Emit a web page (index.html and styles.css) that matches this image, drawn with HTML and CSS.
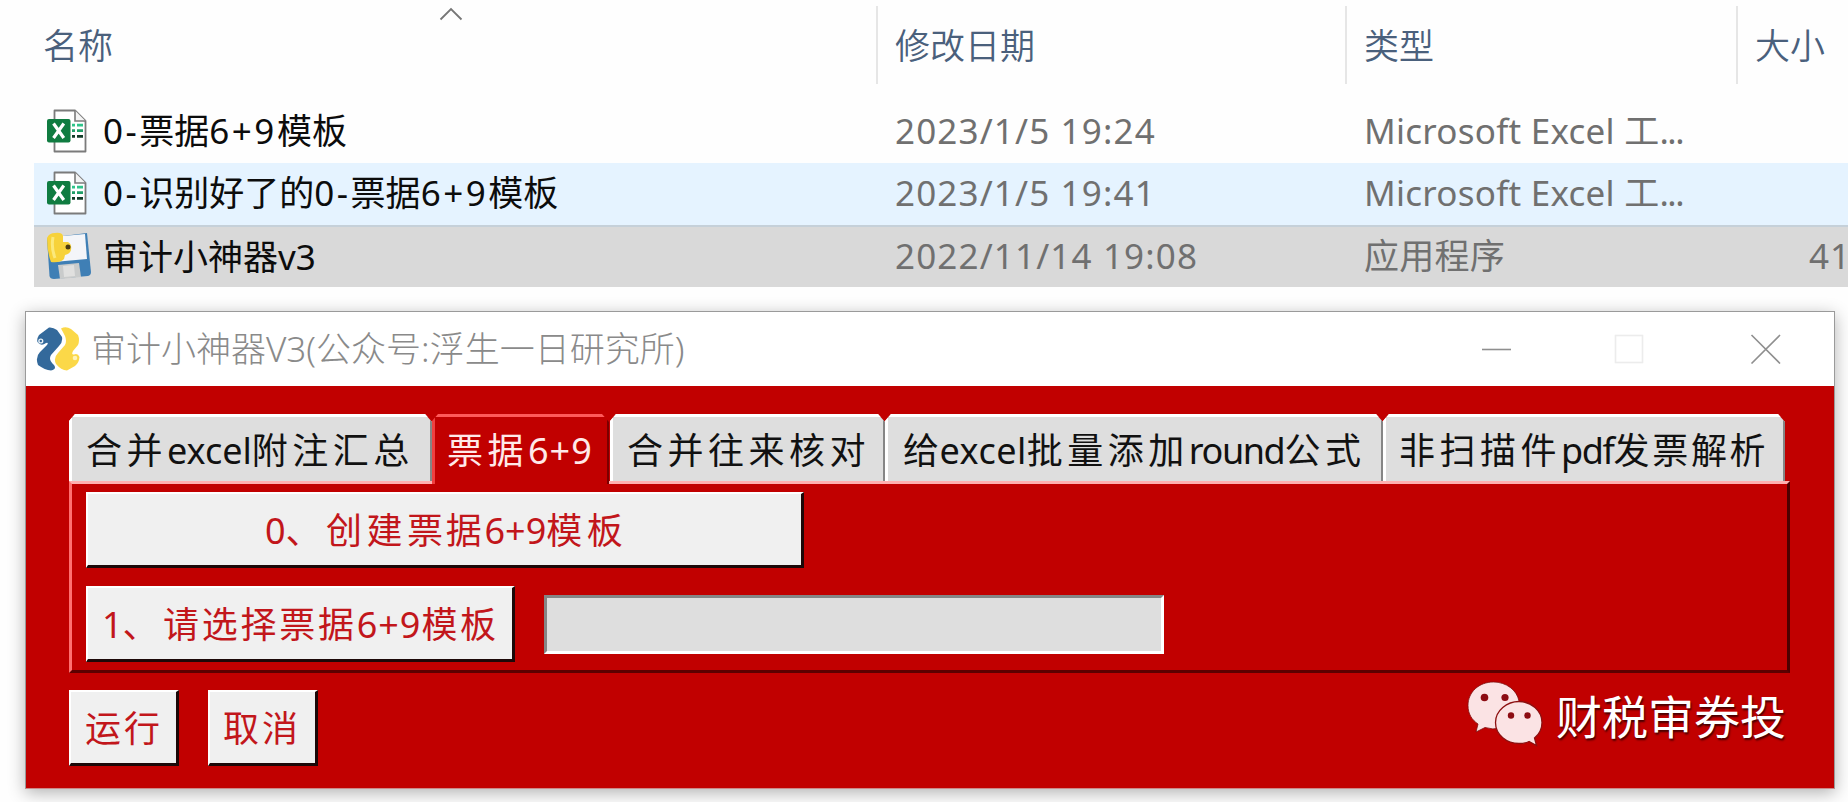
FILE: index.html
```html
<!DOCTYPE html>
<html lang="zh-CN">
<head>
<meta charset="utf-8">
<title>审计小神器V3</title>
<link rel="stylesheet" href="styles.css">
</head>
<body>
<svg class="defs" width="0" height="0">
  <symbol id="xls" viewBox="0 0 40 44">
    <path d="M7.5 1.5H28L38.5 12V42.5H7.500Z" fill="#fff" stroke="#7b7b7b" stroke-width="1.800" stroke-linejoin="round"/>
    <path d="M28 1.500V12H38.500" fill="#f4f4f4" stroke="#7b7b7b" stroke-width="1.600"/>
    <path d="M25 16.200h3M30 16.200h6" stroke="#2fc48a" stroke-width="2.800"/>
    <path d="M25 21.700h3M30 21.700h6" stroke="#1f9f68" stroke-width="2.800"/>
    <path d="M25 27.300h3M30 27.300h6" stroke="#123c28" stroke-width="2.800"/>
    <rect x="0" y="10" width="23.500" height="23.500" rx="2" fill="#107c41"/>
    <path d="M6.500 14.500L16.800 29M16.800 14.500L6.500 29" stroke="#fff" stroke-width="3.200"/>
  </symbol>
</svg>
<main class="explorer">
  <div class="head">
    <svg class="caret" width="24" height="14" viewBox="0 0 24 14"><path d="M1.500 12.500L12 2L22.500 12.500" fill="none" stroke="#767676" stroke-width="1.800"/></svg>
    <div class="col c-name">名称</div>
    <div class="col c-date">修改日期</div>
    <div class="col c-type">类型</div>
    <div class="col c-size">大小</div>
  </div>
  <div class="row">
    <div class="cell c-name"><svg class="ico" width="40" height="44"><use href="#xls"/></svg><span><i>0-</i>票据<i>6+9</i>模板</span></div>
    <div class="cell c-date">2023/1/5 19:24</div>
    <div class="cell c-type">Microsoft Excel 工<b>...</b></div>
    <div class="cell c-size"></div>
  </div>
  <div class="row hover">
    <div class="cell c-name"><svg class="ico" width="40" height="44"><use href="#xls"/></svg><span><i>0-</i>识别好了的<i>0-</i>票据<i>6+9</i>模板</span></div>
    <div class="cell c-date">2023/1/5 19:41</div>
    <div class="cell c-type">Microsoft Excel 工<b>...</b></div>
    <div class="cell c-size"></div>
  </div>
  <div class="row selected">
    <div class="cell c-name">
      <svg class="ico" width="46" height="48" viewBox="0 0 46 48">
        <path d="M1 6L41 1L45 40Q45 43 42 44L8 47Q4 47 3.500 44Z" fill="#3f7fb5"/>
        <path d="M6 5L39 2L41 27L8 30Z" fill="#f4f5f9"/>
        <path d="M12 33L33 31L35 45L14 47Z" fill="#c9cbcb"/>
        <path d="M17 34L28 33L29 44L18 45Z" fill="#e0e0df"/>
        <path d="M1 6Q3 1 9 1Q16 0 17 4V10H22Q26 12 25 18Q24 22 19 23L18 27Q14 31 5 30Q1 20 1 6Z" fill="#f7d23a"/>
        <path d="M7 5Q5 16 9 26" fill="none" stroke="#fbe97c" stroke-width="3"/>
        <circle cx="22" cy="15" r="2.500" fill="#4b3b10"/>
      </svg><span>审计小神器v3</span></div>
    <div class="cell c-date">2022/11/14 19:08</div>
    <div class="cell c-type">应用程序</div>
    <div class="cell c-size">41</div>
  </div>
</main>
<section class="window">
  <header class="titlebar">
    <svg class="logo" width="44" height="44" viewBox="0 0 44 44">
      <path d="M3 8L13 .500Q17 0 21 3L26 10Q27 15 23 19L15 28Q12 33 18 38Q21 42 15 43.500Q9 43 2 38Q-1 30 4 25L11 18Q13 15 10 16Q5 20 1.500 15Q.500 12 3 8Z" fill="#33699b"/>
      <circle cx="4.800" cy="14" r="2.600" fill="#e8f0f6"/><circle cx="4.800" cy="14" r="1.200" fill="#33699b"/>
      <path d="M25 1.500Q30-1 35 2L42 8Q44 13 42 18L37 24Q35 28 38 27.500Q42 26 43.500 30Q43 36 39 39L31 43.500Q25 43 20 37Q17 31 22 26L29 18Q31 14 29 9Q27 5 25 1.500Z" fill="#fbd848"/>
      <circle cx="39" cy="31" r="2.300" fill="#fff3b8"/>
    </svg>
    <h1>审计小神器V3(公众号:浮生一日研究所)</h1>
    <svg class="ctl" width="300" height="30" viewBox="0 0 300 30" fill="none" stroke-width="1.600">
      <path d="M1 15.500H30" stroke="#8f8f8f"/>
      <rect x="134.500" y="1.500" width="27" height="27" stroke="#ececec"/>
      <path d="M270.500 1L299 29.500M299 1L270.500 29.500" stroke="#8f8f8f"/>
    </svg>
  </header>
  <div class="body">
    <nav class="tabs">
      <div class="tab t1"><span class="zh">合并</span>excel<span class="zh">附注汇总</span></div>
      <div class="tab t2 active"><span class="zh">票据</span><span class="num">6+9</span></div>
      <div class="tab t3"><span class="zh">合并往来核对</span></div>
      <div class="tab t4">给excel<span class="zh">批量添加</span><span class="tight">round</span><span class="zh">公式</span></div>
      <div class="tab t5"><span class="zh">非扫描件</span><span class="tight">pdf</span><span class="zh near">发票解析</span></div>
    </nav>
    <div class="panel">
      <button class="btn wide">0<span class="zh">、创建</span><span class="zh near">票据</span>6+9<span class="zh">模板</span></button>
      <div class="line">
        <button class="btn pick">1<span class="zh">、</span><span class="zh near">请选择票据</span><span class="num">6+9</span><span class="zh near">模板</span></button>
        <div class="field"></div>
      </div>
    </div>
    <footer class="foot">
      <button class="btn act">运行</button>
      <button class="btn act">取消</button>
      <div class="mark">
        <svg width="76" height="66" viewBox="0 0 76 66">
          <path d="M26.500 1C12 1 1 11 1 24.500C1 33 5 39 11 43L9 51L18 46.500Q26 49 33 47L52 20C50 9 39 1 26.500 1Z" fill="#fbe3e4" stroke="#7d0d0d" stroke-width=".8"/>
          <path d="M52 20.500C40 20.500 28.500 29.500 28.500 41.500C28.500 54 40 62.500 52 62.500Q58 62.500 62 60.500L69.500 64.500L67.500 57Q75 51 75 41.500C75 29.500 64 20.500 52 20.500Z" fill="#fbe3e4" stroke="#8c1010" stroke-width="1.300"/>
          <g fill="#8c0c12"><circle cx="17.500" cy="16.500" r="3.800"/><circle cx="38" cy="16.500" r="3.600"/><circle cx="44" cy="34.500" r="3.200"/><circle cx="60.500" cy="34.500" r="3.200"/></g>
        </svg>
        <span>财税审券投</span>
      </div>
    </footer>
  </div>
</section>
</body>
</html>
```
FILE: styles.css
```css
* { box-sizing: border-box; }
body {
  margin: 0;
  width: 1848px;
  height: 802px;
  overflow: hidden;
  background: #fefefe;
  font-family: "Noto Sans", "Noto Sans CJK SC", sans-serif;
}
.defs { display: block; }
.explorer { height: 311px; font-size: 35px; font-weight: 350; }
.head { position: relative; display: flex; height: 101px; padding: 6px 0 0 34px; color: #4a607c; }
.caret { position: absolute; left: 439px; top: 7px; }
.col { height: 78px; line-height: 79px; border-right: 2px solid #e6e6e6; white-space: nowrap; }
.c-name { flex: none; width: 844px; padding-left: 9px; }
.c-date { flex: none; width: 469px; padding-left: 17px; }
.c-type { flex: none; width: 391px; padding-left: 17px; }
.c-size { flex: 1; padding-left: 17px; border-right: 0; }
.row { display: flex; height: 62px; margin-left: 34px; line-height: 60px; color: #707070; white-space: nowrap; font-weight: 400; }
.row .c-name { display: flex; align-items: center; height: 60px; padding-left: 13px; color: #0c0c0c; }
.row .c-date { letter-spacing: 1.150px; }
.row .c-type { letter-spacing: .25px; }
.row .ico { flex: none; margin-right: 16px; }
.row:last-child .ico { margin: 0 11px 0 -1px; }
.row .c-size { padding-left: 71px; overflow: hidden; letter-spacing: 1px; }
.row b { font-weight: 400; letter-spacing: -1.500px; }
.row i { font-style: normal; letter-spacing: 2.500px; }
.row.hover { background: #e5f3ff; }
.row.selected { background: #d9d9d9; border-top: 2px solid #c5d0d9; line-height: 57px; }
.row.selected .c-name { height: 58px; }

.window {
  width: 1810px;
  height: 478px;
  margin-left: 25px;
  border: 1px solid #9a9a9a;
  border-bottom-color: #c88;
  background: #fff;
  box-shadow: 0 4px 16px rgba(0, 0, 0, .3);
}
.titlebar { display: flex; align-items: center; height: 74px; padding: 0 53px 0 10px; }
.titlebar h1 { flex: 1; margin: 0 0 0 11px; font-size: 35px; line-height: 50px; font-weight: 300; color: #8a8a8a; white-space: nowrap; }
.body { height: 402px; padding: 28px 44px 0 43px; background: #c10000; }
.tabs { display: flex; height: 67px; }
.tab {
  height: 67px;
  line-height: 68px;
  font-size: 36px;
  color: #111;
  white-space: nowrap;
  background: #dedede;
  border: solid #fff;
  border-width: 3px 2px 0 3px;
  border-right-color: #858585;
  clip-path: polygon(0 7px, 6px 0, calc(100% - 7px) 0, 100% 8px, 100% 100%, 0 100%);
}
.t1 { width: 363px; padding-left: 14px; }
.t2 { width: 177px; padding-left: 12px; }
.t3 { width: 275px; padding-left: 14px; margin-left: 1px; }
.t4 { width: 498px; padding-left: 15px; letter-spacing: .5px; }
.t5 { width: 402px; padding-left: 13px; }
.tab.active {
  z-index: 1;
  height: 70px;
  color: #ffe9e9;
  background: #c10000;
  border-color: #ff5a5a #7a0000 #c10000 #f04040;
}
.zh { letter-spacing: 4.500px; }
.zh.near { letter-spacing: 2.700px; }
.tight { letter-spacing: -1.400px; }
.num { letter-spacing: 1px; }
.panel {
  width: 1721px;
  height: 192px;
  padding: 8px 0 0 14px;
  border: 3px solid;
  border-color: #ffb0b0 #4c0000 #5c0000 #ff7070;
}
.btn {
  display: block;
  height: 76px;
  padding: 0 2px 0 0;
  border: 2px solid #fff;
  border-right: 3px solid #1c0808;
  border-bottom: 3px solid #1c0808;
  background: #f0f0f0;
  color: #c2161b;
  font: 400 36px/73px "Noto Sans", "Noto Sans CJK SC", sans-serif;
  white-space: nowrap;
  text-align: left;
}
.wide { width: 718px; padding-left: 177px; }
.line { display: flex; align-items: center; margin-top: 18px; }
.pick { width: 429px; padding-left: 14px; }
.field { width: 620px; height: 59px; margin-left: 29px; background: #dedede; border: 3px solid; border-color: #858585 #fff #fff #858585; }
.foot { display: flex; margin-top: 17px; }
.act { width: 110px; padding-left: 14px; margin-right: 29px; letter-spacing: 3px; line-height: 74px; }
.act + .act { padding-left: 13px; }
.mark { display: flex; align-items: center; height: 66px; margin: -9px 4px 0 auto; color: #fff; font-size: 46px; text-shadow: 1px 2px 2px #400; }
.mark svg { margin-right: 13px; }
```
